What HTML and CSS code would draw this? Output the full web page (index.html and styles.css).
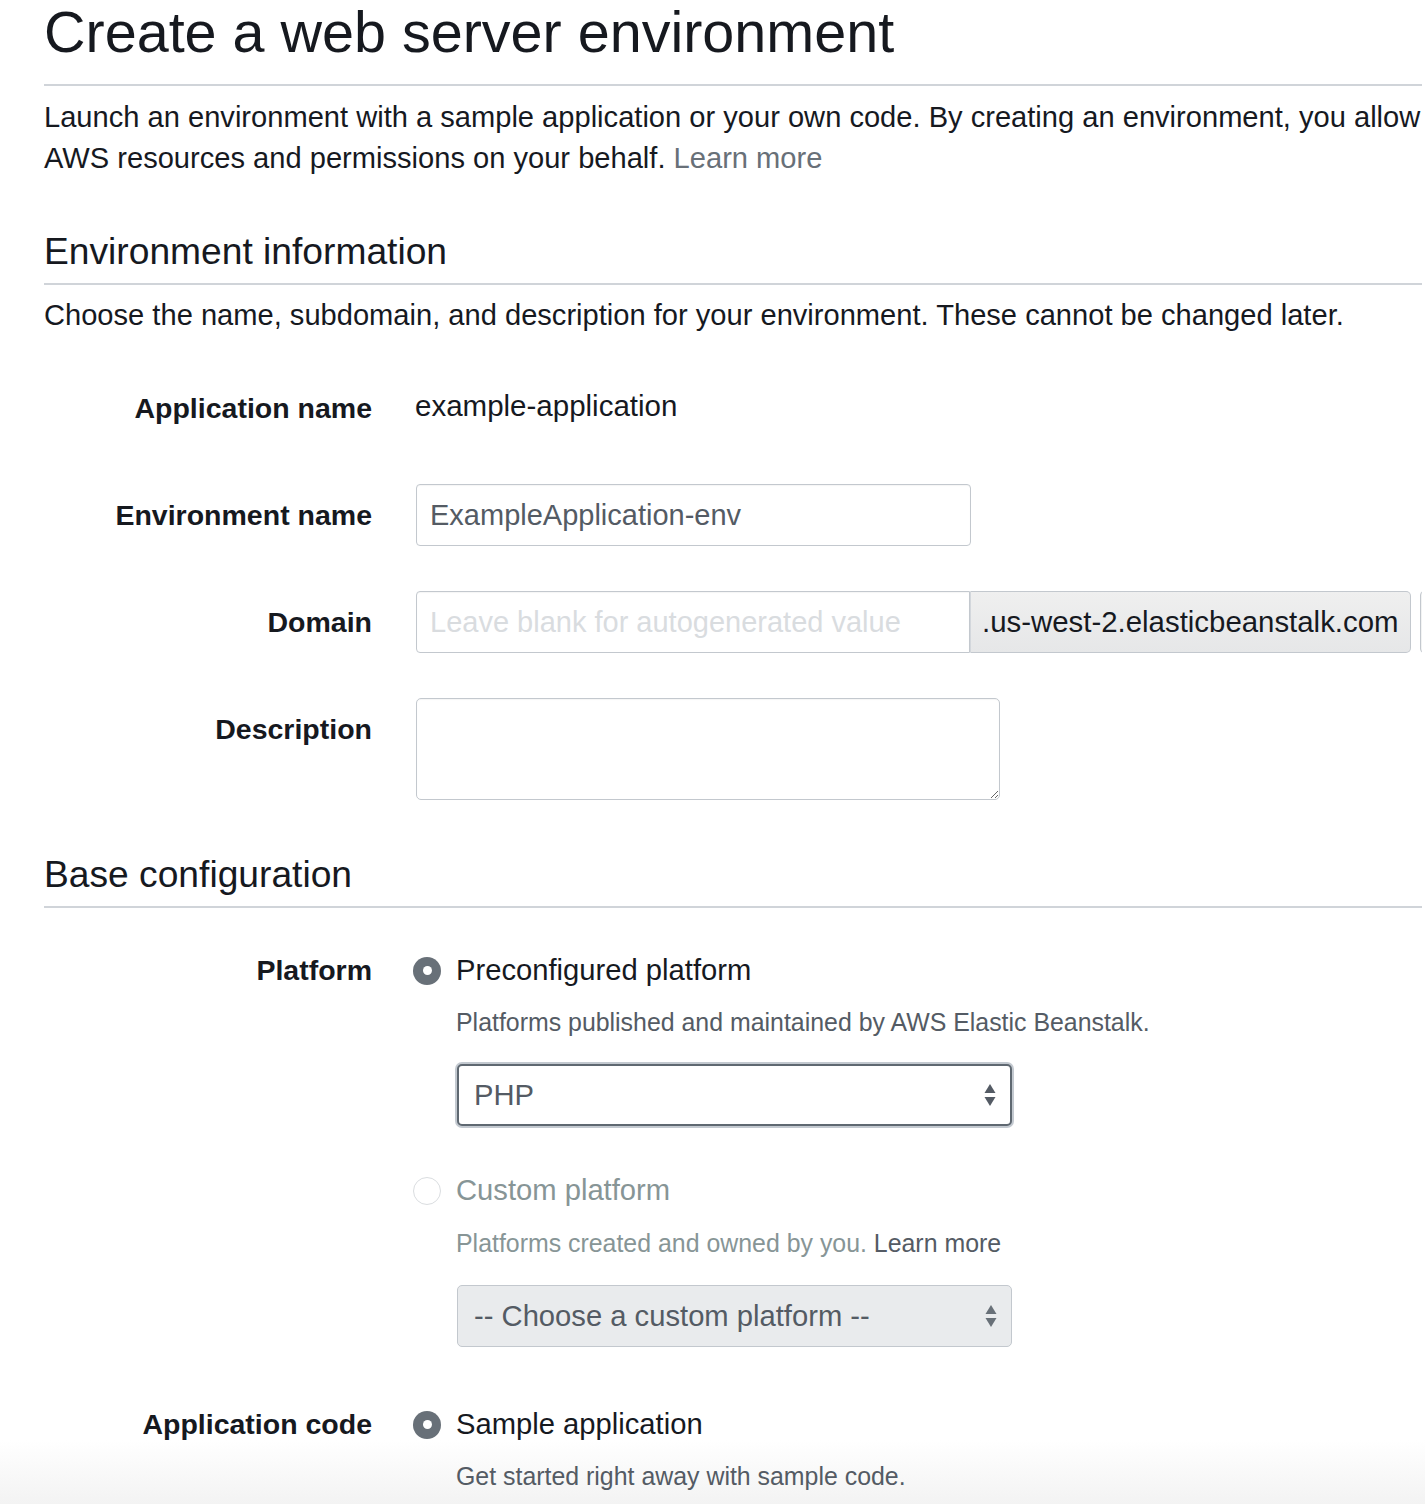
FILE: index.html
```html
<!DOCTYPE html>
<html lang="en">
<head>
<meta charset="utf-8">
<title>Create a web server environment</title>
<link rel="stylesheet" href="styles.css">
</head>
<body>
<div class="page">
  <h1 class="title">Create a web server environment</h1>
  <p class="intro">Launch an environment with a sample application or your own code. By creating an environment, you allow AWS Elastic Beanstalk to manage<br>AWS resources and permissions on your behalf. <a class="link" href="#">Learn more</a></p>

  <h2 class="section">Environment information</h2>
  <p class="desc">Choose the name, subdomain, and description for your environment. These cannot be changed later.</p>

  <div class="form">
    <div class="row">
      <div class="label">Application name</div>
      <div class="value">example-application</div>
    </div>
    <div class="row">
      <div class="label">Environment name</div>
      <input class="input input-env" type="text" value="ExampleApplication-env">
    </div>
    <div class="row">
      <div class="label">Domain</div>
      <div class="domain-group">
        <input class="input input-domain" type="text" placeholder="Leave blank for autogenerated value">
        <span class="addon">.us-west-2.elasticbeanstalk.com</span>
        <button class="check" type="button">Check availability</button>
      </div>
    </div>
    <div class="row">
      <div class="label">Description</div>
      <textarea class="textarea"></textarea>
    </div>
  </div>

  <h2 class="section section-base">Base configuration</h2>

  <div class="radio-row">
    <div class="label label-radio">Platform</div>
    <div class="options">
      <div class="option">
        <span class="radio checked"></span>
        <span class="opt-text">Preconfigured platform</span>
      </div>
      <p class="hint">Platforms published and maintained by AWS Elastic Beanstalk.</p>
      <div class="select focused">
        <span class="select-text">PHP</span>
        <svg class="arrows" width="12" height="24" viewBox="0 0 12 24"><path d="M6 1 L11.5 10 L0.5 10 Z" fill="#545b64"/><path d="M6 23 L11.5 14 L0.5 14 Z" fill="#545b64"/></svg>
      </div>
      <div class="option option-gap">
        <span class="radio"></span>
        <span class="opt-text opt-disabled">Custom platform</span>
      </div>
      <p class="hint hint-disabled">Platforms created and owned by you. <a class="hint-link" href="#">Learn more</a></p>
      <div class="select disabled">
        <span class="select-text">-- Choose a custom platform --</span>
        <svg class="arrows" width="12" height="24" viewBox="0 0 12 24"><path d="M6 1 L11.5 10 L0.5 10 Z" fill="#687078"/><path d="M6 23 L11.5 14 L0.5 14 Z" fill="#687078"/></svg>
      </div>
    </div>
  </div>

  <div class="radio-row row-code">
    <div class="label label-radio">Application code</div>
    <div class="options">
      <div class="option">
        <span class="radio checked"></span>
        <span class="opt-text">Sample application</span>
      </div>
      <p class="hint">Get started right away with sample code.</p>
    </div>
  </div>
</div>
</body>
</html>
```

FILE: styles.css
```css
html, body {
  margin: 0;
  padding: 0;
}

body {
  font-family: "Liberation Sans", Arial, Helvetica, sans-serif;
  color: #16191f;
  background: linear-gradient(to bottom, #ffffff 0, #ffffff 1440px, #f3f3f3 1504px);
  min-height: 1504px;
  overflow: hidden;
}

.page {
  width: 1378px;
  padding-left: 44px;
  overflow: hidden;
}

.title {
  margin: 0;
  font-size: 57.5px;
  font-weight: 400;
  line-height: 64px;
  padding-bottom: 20px;
  border-bottom: 2px solid #d0d4d9;
  white-space: nowrap;
}

.intro {
  margin: 11px 0 0;
  font-size: 29.1px;
  line-height: 41px;
  white-space: nowrap;
}

.link {
  color: #687078;
  text-decoration: none;
}

.section {
  margin: 50px 0 0;
  font-size: 37.2px;
  font-weight: 400;
  line-height: 44px;
  padding-bottom: 10px;
  border-bottom: 2px solid #d0d4d9;
}

.desc {
  margin: 10px 0 0;
  font-size: 29.1px;
  line-height: 41px;
  white-space: nowrap;
}

.form {
  margin-top: 41px;
  display: flex;
  flex-direction: column;
  gap: 45px;
}

.row {
  display: flex;
  align-items: flex-start;
  gap: 44px;
}

.label {
  flex: 0 0 328px;
  text-align: right;
  font-weight: 700;
  font-size: 28.5px;
  line-height: 62px;
  white-space: nowrap;
}

.value {
  margin-left: -1px;
  font-size: 29.5px;
  line-height: 62px;
  margin-top: -2px;
}

.input {
  box-sizing: border-box;
  height: 62px;
  margin: 0;
  padding: 0 13px;
  border: 1px solid #c3c8ce;
  border-radius: 4px;
  background: #fff;
  font-family: "Liberation Sans", Arial, Helvetica, sans-serif;
  font-size: 29px;
  color: #545b64;
  box-shadow: inset 0 1px 1px rgba(0, 0, 0, 0.04);
  outline: none;
}

.input-env {
  width: 555px;
}

.domain-group {
  display: flex;
  align-items: stretch;
  height: 62px;
}

.input-domain {
  width: 554px;
  border-radius: 4px 0 0 4px;
}

.input-domain::placeholder {
  color: #d9dcdf;
}

.addon {
  box-sizing: border-box;
  display: flex;
  align-items: center;
  padding: 0 11px 0 11px;
  border: 1px solid #c3c8ce;
  border-left: 1px solid #d3d7dc;
  border-radius: 0 5px 5px 0;
  background: linear-gradient(to bottom, #efefef, #e6e7e8);
  font-size: 29.4px;
  color: #16191f;
  white-space: nowrap;
}

.check {
  flex: 0 0 auto;
  margin-left: 9px;
  height: 62px;
  padding: 0 20px;
  border: 1px solid #c3c8ce;
  border-radius: 4px;
  background: #f2f3f3;
  font-family: "Liberation Sans", Arial, Helvetica, sans-serif;
  font-size: 29px;
  color: #16191f;
  white-space: nowrap;
}

.textarea {
  box-sizing: border-box;
  width: 584px;
  height: 102px;
  margin: 0;
  border: 1px solid #c3c8ce;
  border-radius: 5px;
  background: #fff;
  resize: both;
  outline: none;
  box-shadow: inset 0 1px 1px rgba(0, 0, 0, 0.04);
}

.section-base {
  margin-top: 52px;
}

.radio-row {
  display: flex;
  align-items: flex-start;
  gap: 44px;
  margin-top: 42px;
}

.row-code {
  margin-top: 57px;
}

.label-radio {
  line-height: 41px;
}

.options {
  display: flex;
  flex-direction: column;
  align-items: flex-start;
}

.option {
  display: flex;
  align-items: center;
  gap: 15px;
  margin-left: -3px;
  height: 41px;
}

.option-gap {
  margin-top: 44px;
}

.radio {
  box-sizing: border-box;
  width: 28px;
  height: 28px;
  border-radius: 50%;
  border: 1px solid #dadde0;
  background: #fff;
  display: flex;
  align-items: center;
  justify-content: center;
}

.radio.checked {
  border: none;
  background: #687078;
}

.radio.checked::after {
  content: "";
  width: 9px;
  height: 9px;
  border-radius: 50%;
  background: #fff;
}

.opt-text {
  font-size: 29.2px;
  line-height: 41px;
  white-space: nowrap;
}

.opt-disabled {
  color: #879596;
}

.hint {
  margin: 13px 0 0 40px;
  font-size: 24.9px;
  line-height: 36px;
  color: #545b64;
  white-space: nowrap;
}

.hint-disabled {
  margin-top: 14px;
  color: #879596;
}

.hint-link {
  color: #545b64;
  text-decoration: none;
}

.select {
  box-sizing: border-box;
  width: 555px;
  height: 62px;
  margin: 24px 0 0 41px;
  padding: 0 14px 0 16px;
  display: flex;
  align-items: center;
  justify-content: space-between;
  border-radius: 5px;
  font-size: 29.2px;
}

.select.focused {
  border: 2px solid #5f6871;
  background: #fff;
  color: #545b64;
  box-shadow: 0 0 0 2px #c3c9d0;
  padding-left: 15px;
}

.select.disabled {
  margin-top: 24px;
  border: 1px solid #c3c8ce;
  background: #e9ebed;
  color: #545b64;
}

.select-text {
  white-space: nowrap;
}

.arrows {
  display: block;
  flex: 0 0 auto;
}
```
